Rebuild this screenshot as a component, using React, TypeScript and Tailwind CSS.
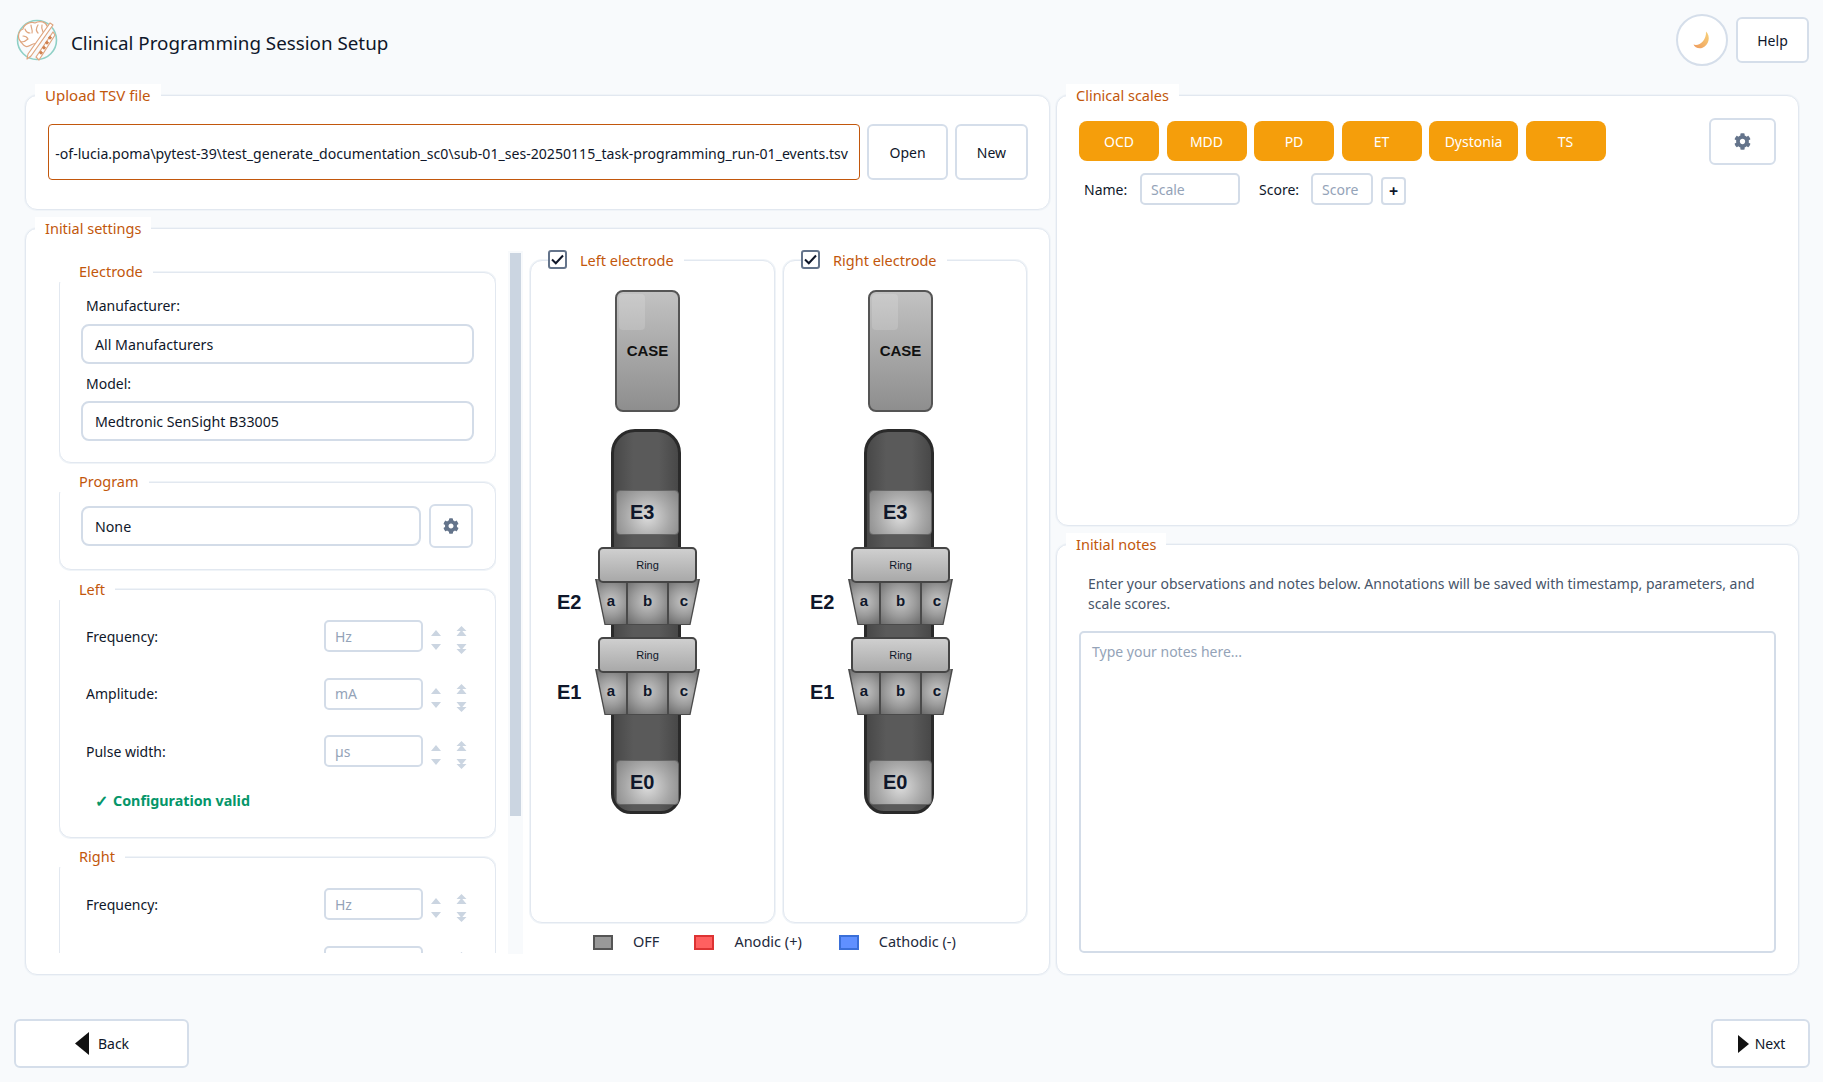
import type { ReactNode } from "react";
import { FaCog } from "react-icons/fa";

const FONT = "[font-family:'Noto_Sans',sans-serif]";
const ARIAL = "[font-family:'Liberation_Sans',Arial,sans-serif]";

function Group({
  title,
  className = "",
  legendClass = "-top-[12px] left-[9px] pl-2.5 pr-2.5",
  children,
}: {
  title: ReactNode;
  className?: string;
  legendClass?: string;
  children?: ReactNode;
}) {
  return (
    <section
      className={`relative rounded-xl border border-[#e2e8f0] bg-white shadow-[0_0_0_1px_#f0f4f8] ${className}`}
    >
      <div
        className={`absolute flex h-[21px] items-center bg-white text-[14.5px] leading-5 text-[#c2570c] ${legendClass}`}
      >
        {title}
      </div>
      {children}
    </section>
  );
}

const innerLegend = "-top-[14px] -left-[2px] h-[23px] pl-[21px] pr-2.5";

function Combo({ value, className = "" }: { value: string; className?: string }) {
  return (
    <div
      className={`flex h-10 items-center rounded-lg border-2 border-[#d3dce8] bg-white pl-[12px] pt-[2px] text-[14.200px] text-[#0f172a] ${className}`}
    >
      {value}
    </div>
  );
}

function GearButton({ className = "", size = 16 }: { className?: string; size?: number }) {
  return (
    <button className={`flex items-center justify-center rounded-md border-2 border-[#d5deea] bg-white ${className}`}>
      <FaCog size={size} color="#64748b" />
    </button>
  );
}

function SpinArrows() {
  return (
    <div className="mt-2 flex items-center gap-[15px] text-[#cbd5e1]">
      <svg width="10" height="20" viewBox="0 0 10 20" fill="currentColor">
        <path d="M5 0l5 6H0zM0 14h10l-5 6z" />
      </svg>
      <svg width="11" height="28" viewBox="0 0 11 28" fill="currentColor">
        <path d="M5.500 0l5 5h-10zM5.500 4l5 6h-10zM.5 18h10l-5 6zM.5 23h10l-5 5z" />
      </svg>
    </div>
  );
}

function SpinRow({ label, unit }: { label: string; unit: string }) {
  return (
    <div className="flex h-8 items-center pl-[26px]">
      <span className="w-[238px] text-[14px] text-[#0f172a]">{label}</span>
      <div className="flex h-8 w-[99px] items-center rounded-[5px] border-2 border-[#d3dce8] bg-white pl-[9px] text-[14px] text-[#94a3b8]">
        {unit}
      </div>
      <div className="ml-2">
        <SpinArrows />
      </div>
    </div>
  );
}

function Segment({ letter, className = "" }: { letter: string; className?: string }) {
  return (
    <div
      className={`flex h-full items-center justify-center bg-[radial-gradient(circle,#c6c6c6_0%,#9c9c9c_50%,#6a6a6a_100%)] text-[15px] font-bold text-[#0f172a] ${className}`}
    >
      {letter}
    </div>
  );
}

function RingLevel({ label, top }: { label: string; top: "upper" | "lower" }) {
  const ringTop = top === "upper" ? "top-[285px]" : "top-[375px]";
  const segTop = top === "upper" ? "top-[317px]" : "top-[407px]";
  const labelTop = top === "upper" ? "top-[328px]" : "top-[418px]";
  return (
    <>
      <span className={`absolute left-[26px] text-[20px] font-bold leading-6 text-[#0f172a] ${labelTop}`}>{label}</span>
      <div
        className={`absolute left-[64px] h-[46px] w-[105px] bg-[#4a4a4a] [clip-path:polygon(0_0,100%_0,91%_100%,9%_100%)] ${segTop}`}
      >
        <div className="flex h-[45px] gap-[2px] px-[1px] [clip-path:polygon(1.500%_0,98.500%_0,90%_100%,10%_100%)]">
          <Segment letter="a" className="w-[30px]" />
          <Segment letter="b" className="flex-1" />
          <Segment letter="c" className="w-[30px]" />
        </div>
      </div>
      <div
        className={`absolute left-[67px] flex h-9 w-[99px] items-center justify-center rounded-[5px] border-2 border-[#454545] bg-[linear-gradient(180deg,#cfcfcf,#a9a9a9)] text-[11px] text-[#0f172a] ${ringTop}`}
      >
        Ring
      </div>
    </>
  );
}

function ElectrodeDiagram() {
  const tile =
    "absolute left-[85px] flex h-[45px] w-[63px] items-center rounded border border-[#666] bg-[radial-gradient(circle_at_50%_60%,#dcdcdc_0%,#a9a9a9_55%,#858585_100%)] pb-[2px] pl-[13px] text-[20px] font-bold text-[#0f172a]";
  return (
    <div className={`relative top-px h-full ${ARIAL}`}>
      <div className="absolute left-[84px] top-[28px] flex h-[122px] w-[65px] items-center justify-center rounded-lg border-2 border-[#555] bg-[linear-gradient(180deg,#c2c2c2,#8e8e8e)] text-[15px] font-bold text-[#111]">
        CASE
        <div className="absolute left-[2px] top-[2px] h-9 w-[26px] rounded bg-white/15" />
      </div>
      <div className="absolute left-[80px] top-[167px] h-[385px] w-[70px] rounded-t-[24px] rounded-b-[20px] border-[3px] border-[#2a2a2a] bg-[linear-gradient(90deg,#484848,#5a5a5a_30%,#5a5a5a_70%,#484848)]" />
      <div className={`${tile} top-[228px]`}>E3</div>
      <RingLevel label="E2" top="upper" />
      <RingLevel label="E1" top="lower" />
      <div className={`${tile} top-[498px]`}>E0</div>
    </div>
  );
}

function ElectrodePanel({ title, className }: { title: string; className: string }) {
  return (
    <Group
      className={`h-[663px] ${className}`}
      legendClass="-top-[12px] left-[17px] gap-[13px] pr-2.5"
      title={
        <>
          <span className="flex size-[19px] items-center justify-center rounded-[3px] border-2 border-[#64748b] bg-white">
            <svg width="13" height="11" viewBox="0 0 13 11" fill="none" stroke="#0f172a" strokeWidth="2">
              <path d="M1 5.500l3.800 3.800L12 1.500" />
            </svg>
          </span>
          {title}
        </>
      }
    >
      <ElectrodeDiagram />
    </Group>
  );
}

function LegendSwatch({ label, className, gap }: { label: string; className: string; gap: string }) {
  return (
    <div className={`flex items-center gap-5 ${gap}`}>
      <span className={`h-[15px] w-5 border-2 ${className}`} />
      <span>{label}</span>
    </div>
  );
}

function Logo() {
  return (
    <svg width="42" height="44" viewBox="0 0 42 44" fill="none" className="shrink-0">
      <circle cx="21" cy="22" r="19.5" stroke="#8fd0c6" strokeWidth="1.6" />
      <g stroke="#dfa680" strokeWidth="1.200" strokeLinecap="round" strokeLinejoin="round">
        <path
          d="M5 24c-4-4-3-11 2-13 1-5 8-8 12-6 5-3 11-1 12 3 2 1 2 3 1 5L24 25c-3 1-5 0-7 1-3 1-5 4-8 2-2-1-3-3-4-4z"
          fill="#fff"
        />
        <path d="M9 11c1 3 3 4 5 4M15 7c0 3 2 5 1 8M22 7c-2 3-2 6 0 8M7 18c2 0 4 1 5 3M5 24c3 0 5-1 7-3M26 7c-1 3 0 5 1 7" />
        <path d="M34 5L12 36l-1 5 4-3L37 7z" fill="#fff" />
        <path d="M37 14L20 39l3 3 16-25z" fill="#fff" />
      </g>
      <g fill="#d0814f">
        <rect x="33" y="18" width="3" height="3" transform="rotate(45 34 19)" />
        <rect x="30" y="23" width="3" height="3" transform="rotate(45 31 24)" />
        <rect x="27" y="28" width="3" height="3" transform="rotate(45 28 29)" />
        <rect x="24" y="33" width="3" height="3" transform="rotate(45 25 34)" />
      </g>
    </svg>
  );
}

function Moon() {
  return (
    <svg width="18" height="18" viewBox="0 0 18 18">
      <defs>
        <linearGradient id="moon" x1="0" y1="1" x2="1" y2="0">
          <stop offset="0" stopColor="#ee9a5c" />
          <stop offset="1" stopColor="#f8d27a" />
        </linearGradient>
      </defs>
      <path d="M13 0.500c5 5 3 14-4 16.500C5 18 1.500 16 0.500 13.500 6 15.500 13.500 10 13 .5z" fill="url(#moon)" />
    </svg>
  );
}

const scales = [
  ["OCD", "w-[80px]"],
  ["MDD", "w-[80px]"],
  ["PD", "w-[80px]"],
  ["ET", "w-[80px]"],
  ["Dystonia", "w-[89px]"],
  ["TS", "w-[80px]"],
];

export default function App() {
  return (
    <div className={`flex h-[1082px] w-full flex-col overflow-hidden bg-[#f8fafc] ${FONT}`}>
      <header className="flex h-[95px] shrink-0 items-start pr-3.5">
        <div className="ml-4 mt-[18px]">
          <Logo />
        </div>
        <h1 className="ml-[13px] mt-[29px] text-[18.800px] leading-7 text-[#0f172a]">Clinical Programming Session Setup</h1>
        <button className="ml-auto mt-[14px] flex size-[52px] items-center justify-center rounded-full border-2 border-[#d5deea] bg-white">
          <Moon />
        </button>
        <button className="ml-2 mt-[17px] h-[46px] w-[73px] rounded-md border-2 border-[#d5deea] bg-white text-[14px] text-[#0f172a]">
          Help
        </button>
      </header>

      <main className="ml-[25px] flex h-[880px] shrink-0 gap-[6px]">
        <div className="flex w-[1025px] flex-col gap-[18px]">
          <Group
            title={<span className="text-[15px]">Upload TSV file</span>}
            className="h-[115px] shrink-0"
          >
            <div className="flex gap-[7px] pl-[22px] pt-7">
              <div className="flex h-14 w-[812px] items-center justify-end overflow-hidden whitespace-nowrap rounded border border-[#c2570c] bg-white pr-[11px] pt-[3px] text-[14.100px] text-[#0f172a]">
                -of-lucia.poma\pytest-39\test_generate_documentation_sc0\sub-01_ses-20250115_task-programming_run-01_events.tsv
              </div>
              <button className="h-14 w-[81px] rounded-md border-2 border-[#d5deea] bg-white text-[14px] text-[#0f172a]">Open</button>
              <button className="h-14 w-[73px] rounded-md border-2 border-[#d5deea] bg-white text-[14px] text-[#0f172a]">New</button>
            </div>
          </Group>

          <Group title="Initial settings" className="h-[747px] shrink-0">
            <div className="flex pt-[21px]">
              <div className="ml-[33px] flex h-[703px] w-[437px] shrink-0 flex-col gap-[19px] overflow-hidden pt-[22px]">
                <Group title="Electrode" legendClass={innerLegend} className="h-[191px] shrink-0">
                  <div className="flex flex-col px-[21px] pt-[22px] text-[14px] text-[#0f172a]">
                    <span className="h-5 pl-[5px]">Manufacturer:</span>
                    <Combo value="All Manufacturers" className="mt-[9px]" />
                    <span className="mt-[9px] h-5 pl-[5px]">Model:</span>
                    <Combo value="Medtronic SenSight B33005" className="mt-2" />
                  </div>
                </Group>
                <Group title="Program" legendClass={innerLegend} className="h-[88px] shrink-0">
                  <div className="flex items-center gap-2 pl-[21px] pt-[21px]">
                    <Combo value="None" className="w-[340px]" />
                    <GearButton className="h-11 w-11" />
                  </div>
                </Group>
                <Group title="Left" legendClass="-top-[13px] -left-[2px] h-[23px] pl-[21px] pr-2.5" className="h-[249px] shrink-0">
                  <div className="flex flex-col gap-[25.500px] pt-[30px]">
                    <SpinRow label="Frequency:" unit="Hz" />
                    <SpinRow label="Amplitude:" unit="mA" />
                    <SpinRow label="Pulse width:" unit="µs" />
                  </div>
                  <p className="ml-[35px] mt-[24px] flex items-center gap-[5px] text-[14.300px] font-bold leading-5 text-[#059669]">
                    <span className="text-[16px]">✓</span>
                    Configuration valid
                  </p>
                </Group>
                <Group title="Right" legendClass={innerLegend} className="h-[300px] shrink-0">
                  <div className="flex flex-col gap-[25.500px] pt-[30px]">
                    <SpinRow label="Frequency:" unit="Hz" />
                    <SpinRow label="" unit="" />
                  </div>
                </Group>
              </div>
              <div className="ml-3 mt-px h-[703px] w-[15px] shrink-0 bg-[#f8fafc] px-0.5 pt-[2px]">
                <div className="h-[563px] bg-[#cbd5e1]" />
              </div>
              <div className="ml-[7px] flex w-[497px] flex-col pt-[10px]">
                <div className="flex gap-2">
                  <ElectrodePanel title="Left electrode" className="w-[245px]" />
                  <ElectrodePanel title="Right electrode" className="w-[244px]" />
                </div>
                <div className="mt-[9px] flex h-5 items-center pl-[63px] text-[14.500px] text-[#1e293b]">
                  <LegendSwatch label="OFF" className="border-[#555] bg-[#999]" gap="mr-[35px]" />
                  <LegendSwatch label="Anodic (+)" className="border-[#d33] bg-[#ff6060]" gap="mr-[37px]" />
                  <LegendSwatch label="Cathodic (-)" className="border-[#3a6fd8] bg-[#6090ff]" gap="" />
                </div>
              </div>
            </div>
          </Group>
        </div>

        <div className="flex w-[743px] flex-col gap-[18px]">
          <Group title="Clinical scales" className="h-[431px] shrink-0">
            <div className="flex pl-[22px] pr-[22px] pt-[22px]">
              <div className="flex h-[47px] items-start gap-[7.500px] pt-[3px]">
                {scales.map(([name, width]) => (
                  <button key={name} className={`h-10 rounded-lg bg-[#f59e0b] text-[14px] text-white ${width}`}>
                    {name}
                  </button>
                ))}
              </div>
              <GearButton className="ml-auto h-[47px] w-[67px]" size={17} />
            </div>
            <div className="mt-2 flex items-center pl-[27px] text-[14px] text-[#0f172a]">
              <span className="w-[56px]">Name:</span>
              <div className="flex h-8 w-[100px] items-center rounded-[5px] border-2 border-[#d3dce8] pl-[9px] text-[#94a3b8]">Scale</div>
              <span className="ml-[19px] w-[52px]">Score:</span>
              <div className="flex h-8 w-[62px] items-center rounded-[5px] border-2 border-[#d3dce8] pl-[9px] text-[#94a3b8]">Score</div>
              <button className="ml-2 mt-[3px] flex h-7 w-[25px] items-center justify-center rounded border-2 border-[#d3dce8] text-[16px] font-bold">+</button>
            </div>
          </Group>
          <Group title="Initial notes" className="h-[431px] shrink-0">
            <p className="ml-[31px] mr-[29px] mt-[29px] text-[14px] leading-5 text-[#475569]">
              Enter your observations and notes below. Annotations will be saved with timestamp, parameters, and scale scores.
            </p>
            <div className="ml-[22px] mt-[17px] h-[322px] w-[697px] rounded-[5px] border-2 border-[#d3dce8] pl-[11px] pt-[8px] text-[14px] text-[#94a3b8]">
              Type your notes here...
            </div>
          </Group>
        </div>
      </main>

      <footer className="mt-[44px] flex h-[49px] shrink-0 justify-between pl-3.5 pr-[13px]">
        <button className="flex h-full w-[175px] items-center justify-center gap-[9px] rounded-md border-2 border-[#d5deea] bg-white pl-px text-[14px] text-[#0f172a]">
          <svg width="14" height="23" viewBox="0 0 14 23" fill="#111">
            <path d="M14 0v23L0 11.500z" />
          </svg>
          Back
        </button>
        <button className="flex h-full w-[99px] items-center justify-center gap-[6px] rounded-md border-2 border-[#d5deea] bg-white pl-[2px] text-[14px] text-[#0f172a]">
          <svg width="11" height="18" viewBox="0 0 11 18" fill="#111">
            <path d="M0 0v18l11-9z" />
          </svg>
          Next
        </button>
      </footer>
    </div>
  );
}
